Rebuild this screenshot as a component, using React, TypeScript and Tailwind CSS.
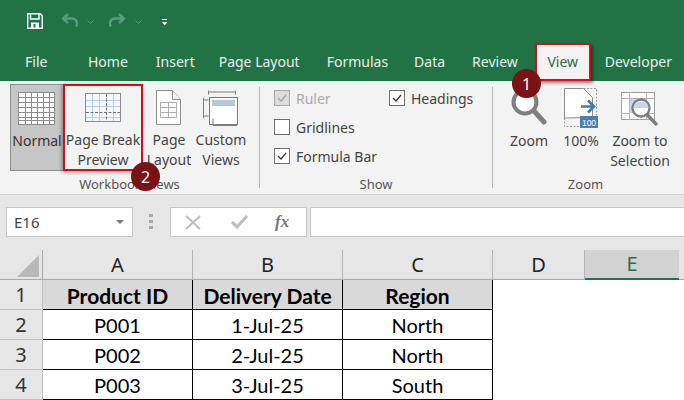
import { ReactNode } from "react";

function Check({ checked, disabled }: { checked?: boolean; disabled?: boolean }) {
  return (
    <span className={`flex h-[16px] w-[16px] items-center justify-center border ${disabled ? "border-[#a8a8a8] bg-[#dcdcdc]" : "border-[#6e6e6e] bg-white"}`}>
      {checked && (
        <svg width="10" height="8" viewBox="0 0 10 8" fill="none" stroke={disabled ? "#a0a0a0" : "#333"} strokeWidth="1.2">
          <path d="M1 4l3 3 5-6" />
        </svg>
      )}
    </span>
  );
}

function CheckRow({ label, checked, disabled }: { label: string; checked?: boolean; disabled?: boolean }) {
  return (
    <div className="flex h-[16px] items-center gap-[6px]">
      <Check checked={checked} disabled={disabled} />
      <span className={disabled ? "text-[#a9a9a9]" : "text-[#444]"}>{label}</span>
    </div>
  );
}

function GroupLabel({ children, cls = "" }: { children: ReactNode; cls?: string }) {
  return <div className={`absolute bottom-[1px] left-0 text-center text-[13px] leading-[18px] text-[#555] ${cls || "right-0"}`}>{children}</div>;
}

function NormalIcon() {
  const xs = [7, 13, 19, 25, 31];
  const ys = [5, 10, 15, 20, 25, 28];
  return (
    <svg width="38" height="34" viewBox="0 0 38 34" fill="#fff" stroke="#8c8c8c">
      <rect x="0.5" y="0.5" width="36" height="32" />
      {xs.map((x) => <path key={x} d={`M${x}.5 1v32`} />)}
      {ys.map((y) => <path key={y} d={`M0 ${y}.5h37`} />)}
    </svg>
  );
}

function PageBreakIcon() {
  return (
    <svg width="36" height="30" viewBox="0 0 36 30" fill="#fff" stroke="#b7cfe0">
      <rect x="0.5" y="0.5" width="35" height="28" stroke="#8c8c8c" fill="#f3f7fa" />
      <path d="M7.5 1v27M14.5 1v27M28.5 1v27M1 7.5h34M1 13.5h34M1 24.5h34" />
      <path d="M21.5 1v27M1 19.5h34" stroke="#6e6e6e" strokeDasharray="3 1.5" />
    </svg>
  );
}

function PageLayoutIcon() {
  return (
    <svg width="26" height="36" viewBox="0 0 26 36" fill="none">
      <path d="M.5.5h16l8 9v25H.5z" fill="#fff" stroke="#8c8c8c" />
      <path d="M16.5.5v9h8" fill="#f3f3f3" stroke="#8c8c8c" />
      <path d="M4.5 12.5h16v15h-16zM4.5 17.5h16M4.5 22.5h16M12.5 12.5v15" stroke="#b0b0b0" />
    </svg>
  );
}

function CustomViewsIcon() {
  return (
    <svg width="36" height="36" viewBox="0 0 36 36" fill="none" stroke="#7c7c7c">
      <path d="M.5 8v20M.5 10h5M.5 26h5M5.5 2h27M5.5.5v4M32.5.5v4" />
      <rect x="6.5" y="7.5" width="28" height="27" fill="#fff" />
      <path d="M10 28.5v7h24" />
      <rect x="9" y="10" width="23" height="6" fill="#b4c7dc" stroke="none" />
    </svg>
  );
}

function ZoomIcon() {
  return (
    <svg width="36" height="40" viewBox="0 0 36 40" fill="none" stroke="#7f7f7f" className="mt-[-4px]">
      <circle cx="14" cy="15" r="11.5" fill="#fff" strokeWidth="4" />
      <path d="M23 24l10 11" strokeWidth="5" strokeLinecap="round" />
    </svg>
  );
}

function HundredIcon() {
  return (
    <svg width="34" height="40" viewBox="0 0 34 40" fill="none" className="mt-[-2px]">
      <path d="M.5 30V.5h19l9 9v20z" fill="#fff" stroke="#8c8c8c" />
      <path d="M19.5.5h13v27M.5 30v8.5h15" stroke="#9a9a9a" strokeDasharray="2 1.5" />
      <path d="M17 18.5h12M24 12.5l6 6-6 6" stroke="#3f7ab5" strokeWidth="2.6" />
      <rect x="16" y="28" width="18" height="12" fill="#4a7eb5" />
      <text x="25" y="37.5" textAnchor="middle" fontSize="8.5" fill="#fff" fontFamily="Liberation Sans, sans-serif">100</text>
    </svg>
  );
}

function ZoomSelIcon() {
  return (
    <svg width="38" height="35" viewBox="0 0 38 35" fill="none" className="mt-[2px]">
      <rect x="0.5" y="0.5" width="33" height="27" fill="#fff" stroke="#a0a0a0" />
      <path d="M0 6.5h33M8.5 1v27M25.5 1v27M0 21.5h8M26 21.5h7" stroke="#b5b5b5" />
      <rect x="9" y="7" width="16" height="14" fill="#c5d6e8" />
      <circle cx="20" cy="16" r="8.5" fill="#fff" stroke="#7f7f7f" strokeWidth="2.4" />
      <path d="M12.2 16a8 8 0 0 1 15.6 0z" fill="#c5d6e8" />
      <path d="M26 22.5l9 9.5" stroke="#7f7f7f" strokeWidth="3.4" strokeLinecap="round" />
    </svg>
  );
}

function BigButton({ icon, top, bottom, cls }: { icon: ReactNode; top: string; bottom?: string; cls: string }) {
  return (
    <div className={`flex flex-col items-center ${cls}`}>
      <div className="flex h-[47px] items-center justify-center">{icon}</div>
      <div className="mt-[-1px] whitespace-nowrap text-center leading-[20px] text-[#444]">
        <div>{top}</div>
        {bottom && <div>{bottom}</div>}
      </div>
    </div>
  );
}

function Sep() {
  return <div className="mt-[6px] h-[101px] w-px shrink-0 bg-[#b4b4b4]" />;
}

function Badge({ n, cls }: { n: number; cls: string }) {
  return (
    <div className={`absolute z-10 flex h-[29px] w-[29px] items-center justify-center rounded-full bg-[#7a1315] text-[16px] text-white ${cls}`}>{n}</div>
  );
}

const headCell = "flex items-center justify-center border-r border-b border-r-[#b4b4b4] border-b-[#a8a8a8] bg-[#e6e6e6] font-['Noto_Sans',sans-serif] text-[20px] text-[#222]";
const rowHead = "flex items-center justify-center border-r border-b border-[#c0c0c0] bg-[#e6e6e6] pt-[1px] font-['Noto_Sans',sans-serif] text-[20px] text-[#333]";
const data = [
  ["2", "P001", "1-Jul-25", "North"],
  ["3", "P002", "2-Jul-25", "North"],
  ["4", "P003", "3-Jul-25", "South"],
];

export default function App() {
  return (
    <div className="relative h-[400px] w-[684px] overflow-hidden bg-white font-['Noto_Sans',sans-serif] text-[14px]">
      {/* title bar + tabs */}
      <div className="h-[81px] bg-[#217346]">
        <div className="flex h-[43px] items-center pl-[27px]">
          <svg width="16" height="16" viewBox="0 0 16 16" fill="none" stroke="#fff" strokeWidth="1.4" className="mt-[-2px]">
            <path d="M.7.7h12.5l2 2v12.6H.7z" />
            <path d="M3.5 1v5h8.5V1" />
            <path d="M4 15V9.5h8V15" fill="#fff" stroke="none" />
            <rect x="6.5" y="11" width="2" height="3.5" fill="#217346" stroke="none" />
          </svg>
          <svg width="18" height="16" viewBox="0 0 18 16" fill="none" stroke="#5a9d7c" strokeWidth="2.4" className="ml-[18px] mt-[-1px]">
            <path d="M7 1L2 5.5 7 10M2 5.5h9a5 5 0 0 1 4 8" />
          </svg>
          <svg width="7" height="4" viewBox="0 0 7 4" fill="none" stroke="#5a9d7c" className="ml-[8px]"><path d="M.5.5l3 3 3-3" /></svg>
          <svg width="18" height="16" viewBox="0 0 18 16" fill="none" stroke="#5a9d7c" strokeWidth="2.4" className="ml-[14px] mt-[-1px]">
            <path d="M11 1l5 4.5-5 4.5M16 5.5H7a5 5 0 0 0-4 8" />
          </svg>
          <svg width="7" height="4" viewBox="0 0 7 4" fill="none" stroke="#5a9d7c" className="ml-[9px]"><path d="M.5.5l3 3 3-3" /></svg>
          <svg width="6" height="7" viewBox="0 0 6 7" className="ml-[20px] mt-[1px]" fill="#fff">
            <rect width="5" height="1" y="0" />
            <path d="M0 3h5.5L2.7 6.5z" />
          </svg>
        </div>
        <div className="flex h-[38px] items-start leading-[20px] text-[#e8f1ec]">
          <span className="ml-[25px] mt-[9px] w-[23px]">File</span>
          <span className="ml-[40px] mt-[9px]">Home</span>
          <span className="ml-[28px] mt-[9px]">Insert</span>
          <span className="ml-[24px] mt-[9px]">Page Layout</span>
          <span className="ml-[27px] mt-[9px]">Formulas</span>
          <span className="ml-[26px] mt-[9px]">Data</span>
          <span className="ml-[27px] mt-[9px]">Review</span>
          <span className="ml-[17px] flex h-[38px] w-[56px] items-center justify-center border-2 border-[#d0101a] bg-[#f3f3f3] pb-[1px] text-[#2a6b4a] shadow-[2px_2px_3px_rgba(0,0,0,0.45)]">View</span>
          <span className="ml-[14px] mt-[9px]">Developer</span>
        </div>
      </div>

      {/* ribbon */}
      <div className="flex h-[114px] border-b border-[#d2d2d2] bg-[#f3f3f3]">
        <div className="relative flex h-full w-[259px] shrink-0 items-start pl-[10px] pt-[3px]">
          <div className="flex h-[87px] w-[53px] flex-col items-center border border-r-0 border-[#8c8c8c] bg-[#c6c6c6]">
            <div className="flex h-[46px] items-center pt-[2px]"><NormalIcon /></div>
            <div className="leading-[20px] text-[#333]">Normal</div>
          </div>
          <div className="h-[87px] w-[80px] shrink-0 border-2 border-[#d0101a] shadow-[-1px_1px_4px_rgba(0,0,0,0.4)]">
            <BigButton icon={<PageBreakIcon />} top="Page Break" bottom="Preview" cls="mt-[-2px] w-full" />
          </div>
          <BigButton icon={<PageLayoutIcon />} top="Page" bottom="Layout" cls="ml-[4px] w-[44px]" />
          <BigButton icon={<CustomViewsIcon />} top="Custom" bottom="Views" cls="ml-[4px] w-[52px]" />
          <GroupLabel>Workbook Views</GroupLabel>
        </div>
        <Sep />
        <div className="relative flex h-full w-[232px] shrink-0 pl-[14px] pt-[9px]">
          <div className="flex w-[115px] flex-col gap-[13px]">
            <CheckRow label="Ruler" checked disabled />
            <CheckRow label="Gridlines" />
            <CheckRow label="Formula Bar" checked />
          </div>
          <CheckRow label="Headings" checked />
          <GroupLabel>Show</GroupLabel>
        </div>
        <Sep />
        <div className="relative flex h-full flex-1 items-start pt-[4px]">
          <BigButton icon={<ZoomIcon />} top="Zoom" cls="ml-[9px] w-[54px]" />
          <BigButton icon={<HundredIcon />} top="100%" cls="ml-[1px] w-[48px]" />
          <BigButton icon={<ZoomSelIcon />} top="Zoom to" bottom="Selection" cls="ml-[0px] w-[70px]" />
          <GroupLabel cls="right-[6px]">Zoom</GroupLabel>
        </div>
      </div>

      {/* formula bar */}
      <div className="flex h-[55px] items-start bg-[#e6e6e6] pl-[6px] pt-[12px]">
        <div className="flex h-[30px] w-[127px] items-center justify-between border border-[#c6c6c6] bg-white pl-[7px] pr-[8px] text-[15px] text-[#444]">
          E16
          <span className="h-0 w-0 border-x-[4px] border-t-[4px] border-x-transparent border-t-[#777]" />
        </div>
        <div className="ml-[16px] mt-[7px] flex w-[4px] flex-col gap-[3px]">
          <span className="h-[3px] bg-[#a8a8a8]" />
          <span className="h-[3px] bg-[#a8a8a8]" />
          <span className="h-[3px] bg-[#a8a8a8]" />
        </div>
        <div className="ml-[17px] flex h-[30px] w-[137px] items-center border border-[#c6c6c6] bg-white">
          <svg width="16" height="15" viewBox="0 0 16 15" stroke="#bdbdbd" strokeWidth="2" className="ml-[14px]"><path d="M1 1l14 13M15 1L1 14" /></svg>
          <svg width="18" height="14" viewBox="0 0 18 14" fill="none" stroke="#bdbdbd" strokeWidth="3" className="ml-[30px]"><path d="M1 7l5 5L16 1" /></svg>
          <span className="ml-[26px] font-['Liberation_Serif',serif] text-[17px] italic font-bold text-[#777]">fx</span>
        </div>
        <div className="ml-[3px] h-[30px] flex-1 border-y border-l border-[#c6c6c6] bg-white" />
      </div>

      {/* sheet */}
      <div className="grid grid-cols-[43px_150px_150px_150px_92px_94px_5px] grid-rows-[30px_30px_30px_30px_30px] font-['Lato',sans-serif]">
        <div className="relative border-r border-b border-[#a8a8a8] bg-[#e6e6e6]">
          <span className="absolute bottom-[2px] right-[3px] h-0 w-0 border-b-[22px] border-l-[22px] border-b-[#b8b8b8] border-l-transparent" />
        </div>
        {["A", "B", "C", "D"].map((c) => (
          <div key={c} className={headCell}>{c}</div>
        ))}
        <div className="flex items-center justify-center border-b-2 border-[#217346] bg-[#d2d2d2] font-['Noto_Sans',sans-serif] text-[20px] text-[#217346]">E</div>
        <div className="border-b border-[#a8a8a8] bg-[#e6e6e6]" />

        <div className={rowHead}>1</div>
        {["Product ID", "Delivery Date", "Region"].map((h) => (
          <div key={h} className="flex items-center justify-center border-r border-b border-black bg-[#d9d9d9] pt-[2px] text-[21px] font-bold text-black">{h}</div>
        ))}
        <div className="col-span-3" />

        {data.map((row) => (
          <div key={row[0]} className="contents">
            <div className={rowHead}>{row[0]}</div>
            {row.slice(1).map((v) => (
              <div key={v} className="flex items-center justify-center border-r border-b border-black pt-[1px] text-[20px] text-black">{v}</div>
            ))}
            <div className="col-span-3" />
          </div>
        ))}
      </div>

      <Badge n={1} cls="left-[512px] top-[69px]" />
      <Badge n={2} cls="left-[131px] top-[162px]" />
    </div>
  );
}
